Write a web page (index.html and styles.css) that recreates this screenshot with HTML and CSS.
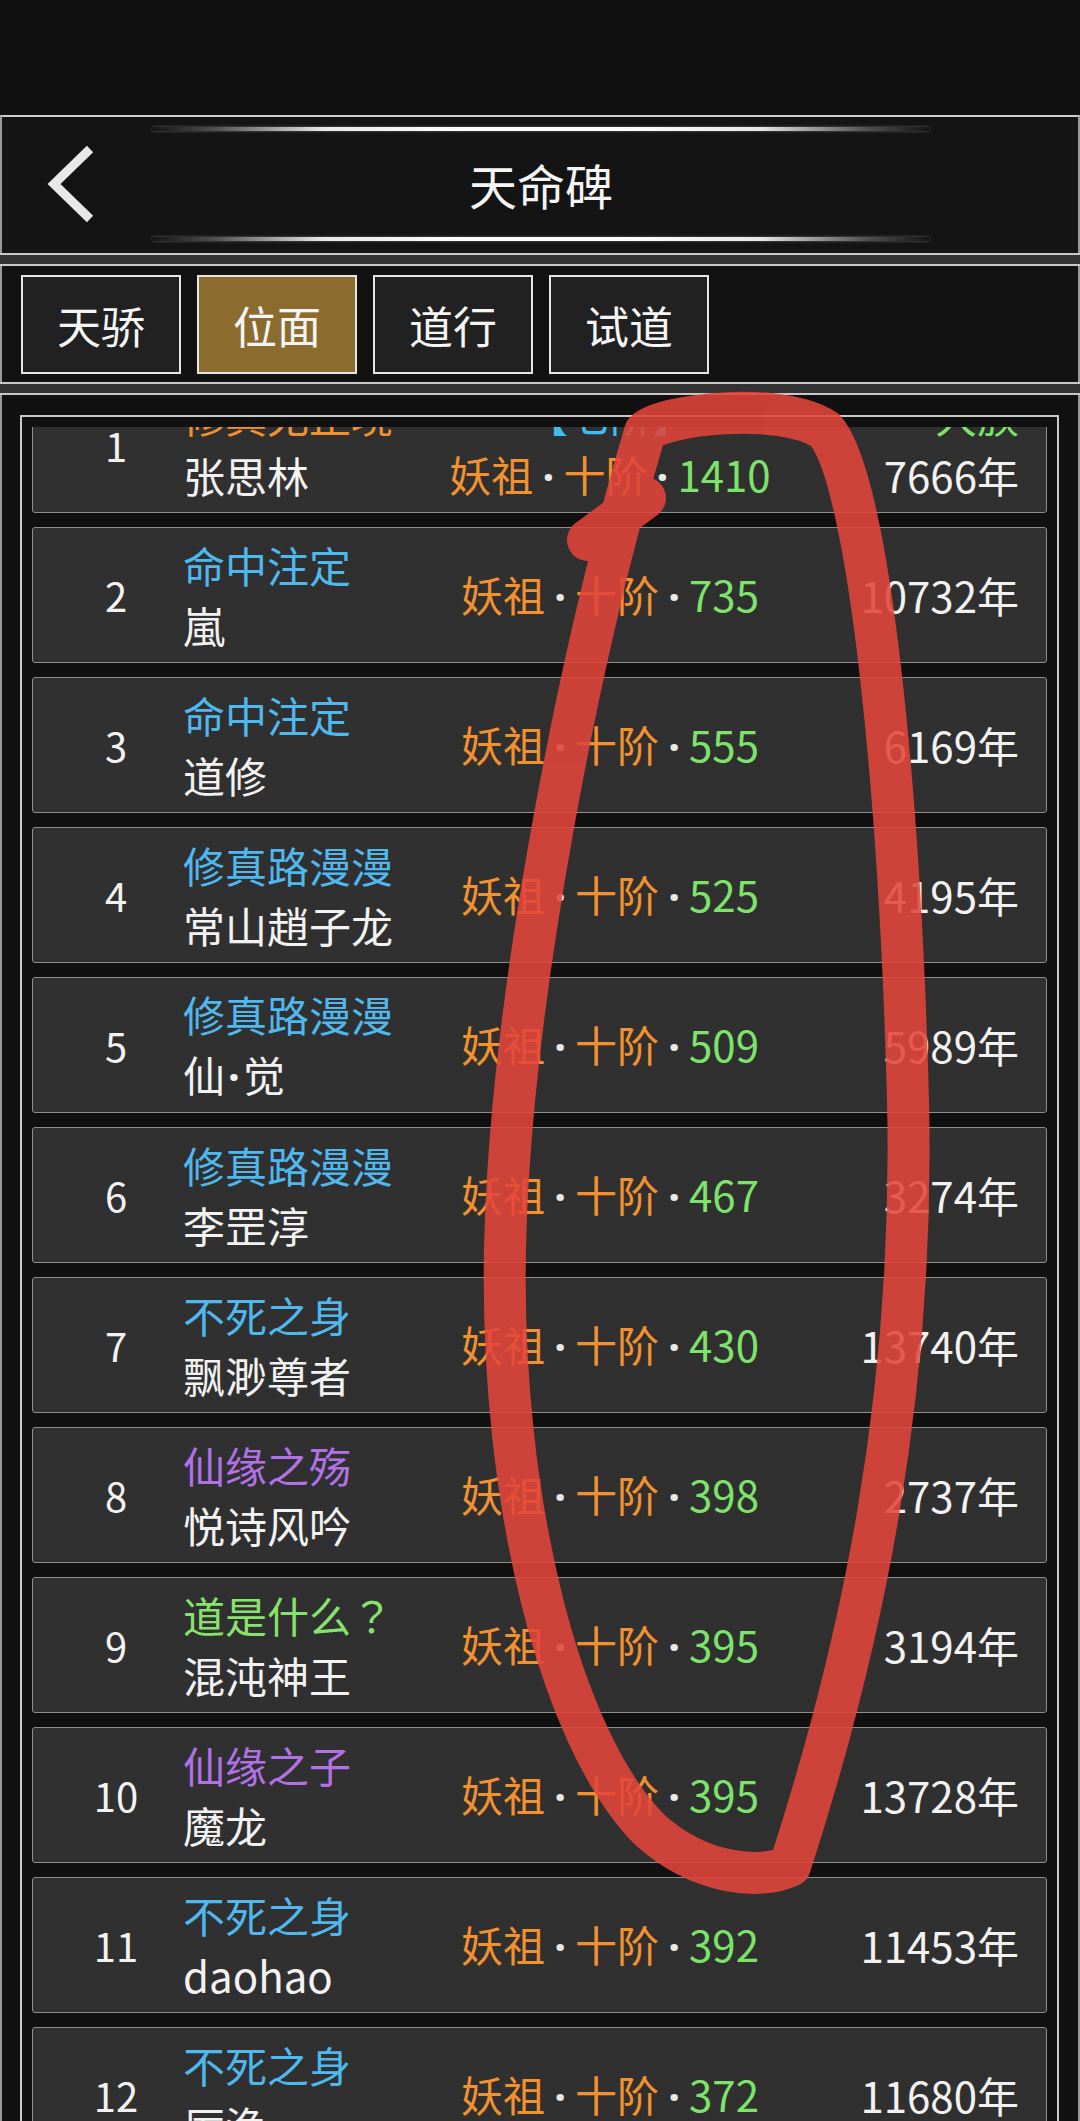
FILE: index.html
```html
<!DOCTYPE html>
<html lang="zh-CN">
<head>
<meta charset="utf-8">
<title>天命碑</title>
<link rel="stylesheet" href="styles.css">
</head>
<body>
<div class="app">
  <div class="statusbar"></div>
  <header class="topbar">
    <div class="glow"></div>
    <div class="titlerow">
      <span class="back">
        <svg width="60" height="80" viewBox="0 0 60 80"><polyline points="52,5 16,40 52,75" fill="none" stroke="#e8e8e8" stroke-width="9" stroke-linejoin="miter" stroke-linecap="butt"/></svg>
      </span>
      <h1 class="title">天命碑</h1>
      <span></span>
    </div>
    <div class="glow"></div>
  </header>
  <div class="sep"></div>
  <nav class="tabs">
    <button class="tab">天骄</button>
    <button class="tab active">位面</button>
    <button class="tab">道行</button>
    <button class="tab">试道</button>
  </nav>
  <div class="sep"></div>
  <main class="content">
    <div class="frame">
      <div class="viewport">
        <ul class="list">
          <li class="row">
            <div class="rank">1</div>
            <div class="name"><div class="c-orange">修真无止境</div><div>张思林</div></div>
            <div class="mid"><div class="c-cyan">【七阶】</div><div><span class="c-orange">妖祖</span><span class="dot">·</span><span class="c-orange">十阶</span><span class="dot">·</span><span class="c-green">1410</span></div></div>
            <div class="age"><div class="c-green">大族</div><div>7666年</div></div>
          </li>
          <li class="row">
            <div class="rank">2</div>
            <div class="name"><div class="c-blue">命中注定</div><div>嵐</div></div>
            <div class="mid"><span class="c-orange">妖祖</span><span class="dot">·</span><span class="c-orange">十阶</span><span class="dot">·</span><span class="c-green">735</span></div>
            <div class="age">10732年</div>
          </li>
          <li class="row">
            <div class="rank">3</div>
            <div class="name"><div class="c-blue">命中注定</div><div>道修</div></div>
            <div class="mid"><span class="c-orange">妖祖</span><span class="dot">·</span><span class="c-orange">十阶</span><span class="dot">·</span><span class="c-green">555</span></div>
            <div class="age">6169年</div>
          </li>
          <li class="row">
            <div class="rank">4</div>
            <div class="name"><div class="c-blue">修真路漫漫</div><div>常山趙子龙</div></div>
            <div class="mid"><span class="c-orange">妖祖</span><span class="dot">·</span><span class="c-orange">十阶</span><span class="dot">·</span><span class="c-green">525</span></div>
            <div class="age">4195年</div>
          </li>
          <li class="row">
            <div class="rank">5</div>
            <div class="name"><div class="c-blue">修真路漫漫</div><div>仙<span class="ndot">·</span>觉</div></div>
            <div class="mid"><span class="c-orange">妖祖</span><span class="dot">·</span><span class="c-orange">十阶</span><span class="dot">·</span><span class="c-green">509</span></div>
            <div class="age">5989年</div>
          </li>
          <li class="row">
            <div class="rank">6</div>
            <div class="name"><div class="c-blue">修真路漫漫</div><div>李罡淳</div></div>
            <div class="mid"><span class="c-orange">妖祖</span><span class="dot">·</span><span class="c-orange">十阶</span><span class="dot">·</span><span class="c-green">467</span></div>
            <div class="age">3274年</div>
          </li>
          <li class="row">
            <div class="rank">7</div>
            <div class="name"><div class="c-blue">不死之身</div><div>飘渺尊者</div></div>
            <div class="mid"><span class="c-orange">妖祖</span><span class="dot">·</span><span class="c-orange">十阶</span><span class="dot">·</span><span class="c-green">430</span></div>
            <div class="age">13740年</div>
          </li>
          <li class="row">
            <div class="rank">8</div>
            <div class="name"><div class="c-purple">仙缘之殇</div><div>悦诗风吟</div></div>
            <div class="mid"><span class="c-orange">妖祖</span><span class="dot">·</span><span class="c-orange">十阶</span><span class="dot">·</span><span class="c-green">398</span></div>
            <div class="age">2737年</div>
          </li>
          <li class="row">
            <div class="rank">9</div>
            <div class="name"><div class="c-lime">道是什么<span class="fwq">？</span></div><div>混沌神王</div></div>
            <div class="mid"><span class="c-orange">妖祖</span><span class="dot">·</span><span class="c-orange">十阶</span><span class="dot">·</span><span class="c-green">395</span></div>
            <div class="age">3194年</div>
          </li>
          <li class="row">
            <div class="rank">10</div>
            <div class="name"><div class="c-purple">仙缘之子</div><div>魔龙</div></div>
            <div class="mid"><span class="c-orange">妖祖</span><span class="dot">·</span><span class="c-orange">十阶</span><span class="dot">·</span><span class="c-green">395</span></div>
            <div class="age">13728年</div>
          </li>
          <li class="row">
            <div class="rank">11</div>
            <div class="name"><div class="c-blue">不死之身</div><div>daohao</div></div>
            <div class="mid"><span class="c-orange">妖祖</span><span class="dot">·</span><span class="c-orange">十阶</span><span class="dot">·</span><span class="c-green">392</span></div>
            <div class="age">11453年</div>
          </li>
          <li class="row">
            <div class="rank">12</div>
            <div class="name"><div class="c-blue">不死之身</div><div>厉渔</div></div>
            <div class="mid"><span class="c-orange">妖祖</span><span class="dot">·</span><span class="c-orange">十阶</span><span class="dot">·</span><span class="c-green">372</span></div>
            <div class="age">11680年</div>
          </li>
        </ul>
      </div>
    </div>
  </main>
  <svg class="scribble" width="1080" height="2121" viewBox="0 0 1080 2121">
    <g opacity="0.88" fill="none" stroke="#e2453a" stroke-width="42" stroke-linecap="round" stroke-linejoin="round">
      <path d="M 645 432 C 660 415, 780 400, 825 430 C 870 480, 900 800, 908 1100 C 915 1400, 860 1650, 790 1866 C 760 1880, 700 1875, 650 1830 C 560 1740, 500 1500, 505 1250 C 510 1000, 580 650, 645 432 Z"/>
      <path d="M 645 498 L 588 540"/>
    </g>
  </svg>
</div>
</body>
</html>
```

FILE: styles.css
```css
* {
  box-sizing: border-box;
  margin: 0;
  padding: 0;
}

html, body {
  background: #111111;
}

body {
  font-family: "Noto Sans CJK SC", "Noto Sans", sans-serif;
  color: #f2f2f2;
}

.app {
  position: relative;
  width: 1080px;
  height: 2121px;
  overflow: hidden;
  display: flex;
  flex-direction: column;
  background: #111111;
}

.statusbar {
  flex: none;
  height: 115px;
  background: #111111;
}

.topbar {
  flex: none;
  height: 138px;
  display: flex;
  flex-direction: column;
  padding-top: 10px;
  background: #141414;
  border-top: 2px solid #cfcfcf;
  border-left: 2px solid #9a9a9a;
  border-right: 2px solid #9a9a9a;
}

.glow {
  flex: none;
  width: 778px;
  height: 4px;
  margin-left: 150px;
  border-radius: 2px;
  background: linear-gradient(90deg,
    rgba(255,255,255,0) 0%,
    rgba(255,255,255,0.25) 8%,
    rgba(255,255,255,0.9) 22%,
    #ffffff 40%,
    #ffffff 60%,
    rgba(255,255,255,0.9) 78%,
    rgba(255,255,255,0.25) 92%,
    rgba(255,255,255,0) 100%);
  box-shadow: 0 0 3px rgba(255,255,255,0.35);
}

.titlerow {
  flex: none;
  height: 106px;
  display: grid;
  grid-template-columns: 1fr auto 1fr;
  align-items: center;
}

.back {
  display: flex;
  align-items: center;
  padding-left: 36px;
}

.back svg {
  display: block;
}

.title {
  font-size: 48px;
  font-weight: 400;
  line-height: 1;
  color: #f5f5f5;
  padding-left: 2px;
}

.sep {
  flex: none;
  height: 13px;
  background: #333333;
  border-top: 2px solid #c9c9c9;
  border-bottom: 2px solid #c9c9c9;
}

.tabs {
  flex: none;
  height: 116px;
  display: flex;
  gap: 16px;
  padding: 9px 0 0 19px;
  background: #121212;
  border-left: 2px solid #9a9a9a;
  border-right: 2px solid #9a9a9a;
}

.tab {
  width: 160px;
  height: 99px;
  background: #212121;
  border: 2px solid #e6e6e6;
  color: #f5f5f5;
  font-family: "Noto Sans CJK SC", "Noto Sans", sans-serif;
  font-size: 44px;
  line-height: 1;
  cursor: pointer;
}

.tab.active {
  background: #8b6c2e;
}

.content {
  flex: 1;
  min-height: 0;
  display: flex;
  flex-direction: column;
  padding: 20px 19px 0 18px;
  background: #111111;
  border-left: 2px solid #9a9a9a;
  border-right: 2px solid #9a9a9a;
}

.frame {
  flex: 1;
  min-height: 0;
  display: flex;
  flex-direction: column;
  padding: 10px 10px 0 10px;
  border: 2px solid #c9c9c9;
  border-bottom: none;
}

.viewport {
  flex: 1;
  min-height: 0;
  overflow: hidden;
}

.list {
  list-style: none;
  display: flex;
  flex-direction: column;
  gap: 14px;
  margin-top: -50px;
}

.row {
  flex: none;
  height: 136px;
  display: grid;
  grid-template-columns: 134px 216px 422px 1fr;
  align-items: center;
  padding: 0 27px 0 16px;
  background: #303030;
  border: 1px solid #8e8e8e;
  border-radius: 3px;
}

.rank {
  font-size: 40px;
  line-height: 1;
  text-align: center;
  color: #f2f2f2;
}

.name,
.mid,
.age {
  font-size: 42px;
  line-height: 60px;
  white-space: nowrap;
}

.mid {
  text-align: center;
}

.age {
  text-align: right;
}

.dot {
  display: inline-block;
  width: 30px;
  text-align: center;
  font-family: "Noto Sans", sans-serif;
  font-weight: 700;
  color: #e8e8e8;
}

.ndot {
  display: inline-block;
  width: 18px;
  text-align: center;
  font-family: "Noto Sans", sans-serif;
  font-weight: 700;
}

.fwq {
  display: inline-block;
  width: 42px;
  text-align: center;
  font-family: "Noto Sans CJK TC", "Noto Sans CJK SC", sans-serif;
}

.c-orange { color: #f2912f; }
.c-green { color: #7de36b; }
.c-lime { color: #86e36c; }
.c-blue { color: #4fb8ee; }
.c-cyan { color: #3fbdf0; }
.c-purple { color: #b172e8; }

.scribble {
  position: absolute;
  top: 0;
  left: 0;
  pointer-events: none;
}
```
